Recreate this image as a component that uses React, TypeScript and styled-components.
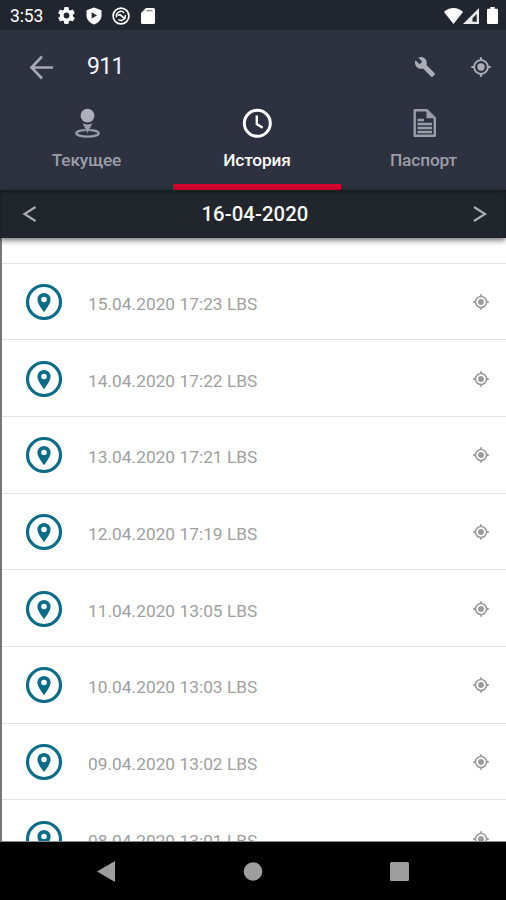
import React from "react";
import styled, { createGlobalStyle } from "styled-components";

const GlobalStyle = createGlobalStyle`
  * { box-sizing: border-box; }
  html, body { margin: 0; padding: 0; background: #000; }
  body { font-family: Roboto, "Noto Sans", sans-serif; }
  svg { display: block; flex: none; overflow: visible; }
`;

const Screen = styled.div`
  width: 506px;
  height: 900px;
  display: flex;
  flex-direction: column;
  overflow: hidden;
  background: #fff;
`;

const StatusBar = styled.div`
  height: 30px;
  flex: none;
  display: flex;
  align-items: center;
  padding: 1px 8px 0 10px;
  background: #21252e;
  color: #fff;
`;

const Clock = styled.span`
  width: 48px;
  font-size: 17.5px;
  line-height: 20px;
  letter-spacing: -0.1px;
  white-space: nowrap;
`;

const StatusIcons = styled.div`
  display: flex;
  align-items: center;
  gap: 10.7px;
`;

const SystemIcons = styled.div`
  display: flex;
  align-items: center;
  margin-left: auto;
`;

const BatterySlot = styled.div`
  margin-left: 8px;
`;

const Header = styled.header`
  flex: none;
  height: 160px;
  display: flex;
  flex-direction: column;
  background: #2e3240;
`;

const Toolbar = styled.div`
  height: 73px;
  display: flex;
  align-items: center;
  padding: 0 15px 0 29px;
`;

const Title = styled.h1`
  margin: 0 auto 0 33px;
  font-size: 23px;
  line-height: 28px;
  font-weight: 400;
  letter-spacing: -0.7px;
  color: #f4f4f8;
`;

const Actions = styled.div`
  display: flex;
  align-items: center;
  gap: 36px;
`;

const Tabs = styled.nav`
  flex: 1;
  display: grid;
  grid-template-columns: 173px 168px 165px;
`;

const Tab = styled.div<{ $active?: boolean }>`
  display: flex;
  flex-direction: column;
  align-items: center;
  padding-top: 5px;
  color: ${(p) => (p.$active ? "#fff" : "#9b9ea9")};
  border-bottom: 6px solid ${(p) => (p.$active ? "#d5002f" : "transparent")};
`;

const TabLabel = styled.span`
  margin-top: 12px;
  font-size: 17.3px;
  line-height: 20px;
  font-weight: 500;
  letter-spacing: -0.15px;
`;

const DateBar = styled.div`
  position: relative;
  z-index: 1;
  height: 48px;
  flex: none;
  display: flex;
  align-items: center;
  justify-content: space-between;
  padding: 0 19px 0 23px;
  background: #20262c;
  box-shadow: 0 2px 6px rgba(0, 0, 0, 0.6), inset 0 2px 3px #171b20;
`;

const DateText = styled.span`
  font-size: 20.3px;
  line-height: 24px;
  font-weight: 500;
  letter-spacing: 0.1px;
  color: #f7f8f8;
`;

const List = styled.div`
  flex: 1;
  min-height: 0;
  overflow: hidden;
  padding-top: 24.8px;
  border-left: 2px solid #777;
  border-bottom: 1px solid #888;
`;

const Row = styled.div`
  height: 76.66px;
  display: flex;
  align-items: center;
  padding: 1px 17px 0 23px;
  border-top: 1px solid #e4e4e4;
`;

const RowText = styled.span`
  flex: 1;
  margin: 4px 0 0 25px;
  font-size: 17.3px;
  line-height: 20px;
  letter-spacing: 0.03px;
  color: #a0a0a0;
`;

const NavBar = styled.div`
  flex: none;
  height: 58px;
  display: flex;
  align-items: center;
  justify-content: space-between;
  padding: 0 97px;
  background: #000;
`;

const Target = ({ size, color }: { size: number; color: string }) => (
  <svg width={size} height={size} viewBox="0 0 20 20" fill="none" stroke={color}>
    <circle cx="10" cy="10" r="6.9" strokeWidth="1.9" />
    <circle cx="10" cy="10" r="3.7" fill={color} stroke="none" />
    <path d="M10 .3v2.800M10 16.900v2.800M.3 10h2.800M16.900 10h2.800" strokeWidth="2.200" />
  </svg>
);

const GearIcon = () => (
  <svg width="17" height="17" viewBox="2 2 20 20" fill="#fff">
    <path d="M19.4 13c0-.3.1-.6.1-1s0-.7-.1-1l2.1-1.6c.2-.2.3-.4.1-.7l-2-3.4c-.1-.2-.4-.3-.6-.2l-2.5 1c-.5-.4-1.1-.7-1.7-1l-.4-2.6c0-.3-.2-.5-.5-.5h-4c-.2 0-.4.2-.5.5L9 5.100c-.6.3-1.100.6-1.600 1l-2.500-1c-.2-.1-.5 0-.6.2l-2 3.400c-.1.2-.1.5.1.7L4.500 11c0 .3-.1.700-.1 1s0 .7.1 1l-2.100 1.600c-.2.2-.2.4-.1.7l2 3.400c.1.2.4.3.6.2l2.500-1c.5.4 1 .7 1.600 1l.4 2.600c.1.300.3.500.5.500h4c.3 0 .5-.2.5-.5l.4-2.600c.6-.3 1.200-.6 1.700-1l2.500 1c.2.1.5 0 .6-.2l2-3.400c.2-.3.1-.5-.1-.7zM12 15.400a3.400 3.400 0 1 1 0-6.800 3.400 3.400 0 0 1 0 6.800z" />
  </svg>
);

const ShieldIcon = () => (
  <svg width="16" height="18" viewBox="0 0 16 18">
    <path d="M8 .5 15.500 3.200v5.300c0 4-3 7.300-7.500 9C3.500 15.800.5 12.500.5 8.500V3.200z" fill="#fff" />
    <path d="M5.600 5.200v6.400L11 8.400z" fill="#21252e" />
  </svg>
);

const SyncIcon = () => (
  <svg width="18" height="18" viewBox="0 0 18 18" fill="none" stroke="#fff">
    <circle cx="9" cy="9" r="7.900" strokeWidth="1.700" />
    <path d="M4.600 10.300a4.500 4.500 0 0 1 7.600-4.400M13.300 8.200a4.500 4.500 0 0 1-7.100 4.300" strokeWidth="1.500" />
    <path d="M5.500 8.300 8 7.600l5.300 4.600" strokeWidth="1.700" />
  </svg>
);

const SdIcon = () => (
  <svg width="14" height="16" viewBox="0 0 14 16">
    <path d="M5 0h7.500Q14 0 14 1.500v13q0 1.500-1.500 1.500h-11Q0 16 0 14.500V5z" fill="#fff" />
    <path d="M5.500 2.600h6" stroke="#8d9096" strokeWidth="1.600" />
  </svg>
);

const WifiIcon = () => (
  <svg width="19" height="16" viewBox="0 0 20 16" preserveAspectRatio="none">
    <path d="M0 4C5.500-1.200 14.500-1.200 20 4L10 16z" fill="#fff" />
  </svg>
);

const SignalIcon = () => (
  <svg width="16" height="16" viewBox="0 0 16 16">
    <path fillRule="evenodd" d="M16 0v16H0zM13.700 6 9.500 10.300v3.500h4.200z" fill="#e8e8e8" />
  </svg>
);

const BatteryIcon = () => (
  <svg width="11" height="17" viewBox="0 0 11 17">
    <path d="M3.300 0h4.400v1.800H10q1 0 1 1V16q0 1-1 1H1q-1 0-1-1V2.800q0-1 1-1h2.300z" fill="#fff" />
  </svg>
);

const BackArrow = () => (
  <svg width="25" height="24" viewBox="0 0 25 24" fill="none" stroke="#a7a9b4" strokeWidth="2.600">
    <path d="M13 1.500 2.500 12.500 13 23.500M2.500 12.500H24" />
  </svg>
);

const WrenchIcon = () => (
  <svg width="20" height="20" viewBox="1 1 22 22" fill="#abadb7">
    <path d="M22.700 19l-9.100-9.100c.9-2.300.4-5-1.500-6.900-2-2-5-2.400-7.400-1.300L9 6 6 9 1.600 4.700C.4 7.100.9 10.100 2.900 12.100c1.900 1.900 4.600 2.400 6.900 1.500l9.100 9.100c.4.4 1 .4 1.400 0l2.300-2.300c.5-.4.5-1.100.1-1.400z" />
  </svg>
);

const PlacementIcon = () => (
  <svg width="26" height="30" viewBox="0 0 26 30">
    <ellipse cx="13.500" cy="25.300" rx="11.300" ry="3.300" fill="none" stroke="currentColor" strokeWidth="2.200" />
    <path d="M8.200 15q5.300 2.400 10.600 0l-5.300 10.500z" fill="currentColor" stroke="#2e3240" strokeWidth=".4" />
    <circle cx="13.500" cy="7.700" r="6.900" fill="#adb0bb" />
  </svg>
);

const HistoryIcon = () => (
  <svg width="30" height="30" viewBox="0 0 30 30" fill="none" stroke="currentColor">
    <circle cx="15.300" cy="15.300" r="13" strokeWidth="3" />
    <path d="M14.800 7.500v8.600l5.800 3.700" strokeWidth="2.400" />
  </svg>
);

const DocumentIcon = () => (
  <svg width="24" height="30" viewBox="0 0 24 30" fill="none" stroke="currentColor">
    <path d="M2.700 2.200h12.100l8 8v17.600H2.700z" strokeWidth="2.400" strokeLinejoin="round" />
    <path d="M14.500 1.500v8.800h8.500z" fill="currentColor" stroke="none" />
    <path d="M5.500 12h6.500M5.500 16h14.500M5.500 20h14.500M5.500 24h14.500" strokeWidth="2.300" />
  </svg>
);

const PinBadge = () => (
  <svg width="38" height="38" viewBox="0 0 38 38">
    <circle cx="19" cy="19" r="16.500" fill="none" stroke="#0b6c87" strokeWidth="3.200" />
    <path
      fillRule="evenodd"
      d="M19 9.900a6.600 6.600 0 0 0-6.600 6.600C12.400 21.300 19 29 19 29s6.600-7.700 6.600-12.500A6.600 6.600 0 0 0 19 9.900zm0 9.400a2.800 2.800 0 1 1 0-5.600 2.800 2.800 0 0 1 0 5.600z"
      fill="#0b6c87"
    />
  </svg>
);

const Chevron = ({ next }: { next?: boolean }) => (
  <svg width="14" height="16" viewBox="0 0 14 16" fill="none" stroke="#a9adb1" strokeWidth="2.200">
    <path d={next ? "M1 1l11 7-11 7" : "M12.500 1 1.500 8l11 7"} />
  </svg>
);

const entries = [
  "15.04.2020 17:23 LBS",
  "14.04.2020 17:22 LBS",
  "13.04.2020 17:21 LBS",
  "12.04.2020 17:19 LBS",
  "11.04.2020 13:05 LBS",
  "10.04.2020 13:03 LBS",
  "09.04.2020 13:02 LBS",
  "08.04.2020 13:01 LBS",
];

export default function App() {
  return (
    <>
      <GlobalStyle />
      <Screen>
        <StatusBar>
          <Clock>3:53</Clock>
          <StatusIcons>
            <GearIcon />
            <ShieldIcon />
            <SyncIcon />
            <SdIcon />
          </StatusIcons>
          <SystemIcons>
            <WifiIcon />
            <SignalIcon />
            <BatterySlot>
              <BatteryIcon />
            </BatterySlot>
          </SystemIcons>
        </StatusBar>
        <Header>
          <Toolbar>
            <BackArrow />
            <Title>911</Title>
            <Actions>
              <WrenchIcon />
              <Target size={20} color="#abadb7" />
            </Actions>
          </Toolbar>
          <Tabs>
            <Tab>
              <PlacementIcon />
              <TabLabel>Текущее</TabLabel>
            </Tab>
            <Tab $active>
              <HistoryIcon />
              <TabLabel>История</TabLabel>
            </Tab>
            <Tab>
              <DocumentIcon />
              <TabLabel>Паспорт</TabLabel>
            </Tab>
          </Tabs>
        </Header>
        <DateBar>
          <Chevron />
          <DateText>16-04-2020</DateText>
          <Chevron next />
        </DateBar>
        <List>
          {entries.map((entry) => (
            <Row key={entry}>
              <PinBadge />
              <RowText>{entry}</RowText>
              <Target size={16} color="#9b9b9b" />
            </Row>
          ))}
        </List>
        <NavBar>
          <svg width="18" height="21" viewBox="0 0 18 21" fill="#9e9e9e">
            <path d="M18 0v21L0 10.500z" />
          </svg>
          <svg width="19" height="19" viewBox="0 0 19 19" fill="#9e9e9e">
            <circle cx="10" cy="9.500" r="9.300" />
          </svg>
          <svg width="19" height="19" viewBox="0 0 19 19" fill="#9e9e9e">
            <rect width="19" height="19" rx="1.500" />
          </svg>
        </NavBar>
      </Screen>
    </>
  );
}
